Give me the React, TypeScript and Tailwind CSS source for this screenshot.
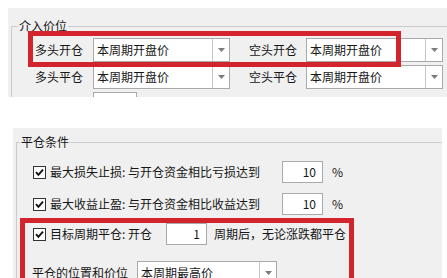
import React from "react";

function Arrow() {
  return (
    <svg width="7" height="4" viewBox="0 0 7 4">
      <path d="M0 0 L7 0 L3.5 4 Z" fill="#7c7c7c" />
    </svg>
  );
}

function Combo({ value, wide }: { value: string; wide?: boolean }) {
  return (
    <div className={`flex h-[24px] shrink-0 border border-[#a9a9a9] bg-white ${wide ? "w-[140px]" : "w-[137px]"}`}>
      <span className="flex-1 whitespace-nowrap pl-[3px] leading-[22px]">{value}</span>
      <span className="flex w-[17px] items-center justify-center border-l border-[#c6c6c6]">
        <Arrow />
      </span>
    </div>
  );
}

function NumBox({ value }: { value: string }) {
  return (
    <div className="h-[22px] w-[41px] shrink-0 border border-[#a9a9a9] bg-white pr-[6px] text-right leading-[20px]">
      {value}
    </div>
  );
}

function Check() {
  return (
    <svg width="13" height="13" viewBox="0 0 13 13" className="shrink-0">
      <rect x="0.5" y="0.5" width="12" height="12" fill="#fff" stroke="#333" />
      <path d="M3 6.2 L5.4 8.8 L10 3.6" fill="none" stroke="#111" strokeWidth="1.9" />
    </svg>
  );
}

export default function App() {
  return (
    <div className="relative h-[278px] w-[447px] overflow-hidden bg-white text-[12px] text-[#161616] font-['Noto_Sans_CJK_SC','Microsoft_YaHei',sans-serif]">
      {/* 介入价位 */}
      <div className="ml-[8px] mt-[8px] h-[89px] overflow-hidden bg-[#f0f0f0] pl-[3px] pt-[18px]">
        <div className="relative border-l border-t border-[#cbcbcb] pt-[11px]">
          <span className="absolute left-[6px] top-[-9px] bg-[#f0f0f0] px-[1px] leading-[16px]">介入价位</span>
          <div className="flex flex-col gap-[3px]">
            <div className="flex items-center">
              <span className="w-[81px] shrink-0 pr-[10px] text-right">多头开仓</span>
              <Combo value="本周期开盘价" />
              <span className="w-[76px] shrink-0 pr-[9px] text-right">空头开仓</span>
              <Combo value="本周期开盘价" />
            </div>
            <div className="flex items-center">
              <span className="w-[81px] shrink-0 pr-[10px] text-right">多头平仓</span>
              <Combo value="本周期开盘价" />
              <span className="w-[76px] shrink-0 pr-[9px] text-right">空头平仓</span>
              <Combo value="本周期开盘价" />
            </div>
            <div className="flex items-center pl-[81px]">
              <div className="h-[24px] w-[44px] border border-[#a9a9a9] bg-white" />
            </div>
          </div>
        </div>
      </div>

      {/* 平仓条件 */}
      <div className="ml-[13px] mt-[31px] h-[160px] w-[429px] bg-[#f0f0f0] pl-[3px] pt-[14px]">
        <div className="relative h-full border-l border-t border-[#cbcbcb] pt-[18px]">
          <span className="absolute left-[3px] top-[-9px] bg-[#f0f0f0] px-[1px] leading-[16px]">平仓条件</span>

          <div className="flex h-[22px] items-center pl-[16px]">
            <Check />
            <span className="ml-[4px] w-[232px] shrink-0 whitespace-nowrap">最大损失止损: 与开仓资金相比亏损达到</span>
            <NumBox value="10" />
            <span className="ml-[9px]">%</span>
          </div>

          <div className="mt-[10px] flex h-[22px] items-center pl-[16px]">
            <Check />
            <span className="ml-[4px] w-[232px] shrink-0 whitespace-nowrap">最大收益止盈: 与开仓资金相比收益达到</span>
            <NumBox value="10" />
            <span className="ml-[9px]">%</span>
          </div>

          <div className="mt-[8px] flex h-[22px] items-center pl-[16px]">
            <Check />
            <span className="ml-[4px] w-[116px] shrink-0 whitespace-nowrap">目标周期平仓: 开仓</span>
            <NumBox value="1" />
            <span className="ml-[7px] whitespace-nowrap">周期后，无论涨跌都平仓</span>
          </div>

          <div className="mt-[16px] flex items-center pl-[15px]">
            <span className="w-[105px] shrink-0 whitespace-nowrap">平仓的位置和价位</span>
            <Combo value="本周期最高价" wide />
          </div>
        </div>
      </div>

      {/* annotation boxes */}
      <div className="absolute left-[28px] top-[31px] h-[36px] w-[373px] border-[5px] border-[#d3242d]" />
      <div className="absolute left-[20px] top-[218px] h-[80px] w-[334px] border-[5px] border-[#d3242d]" />
    </div>
  );
}
